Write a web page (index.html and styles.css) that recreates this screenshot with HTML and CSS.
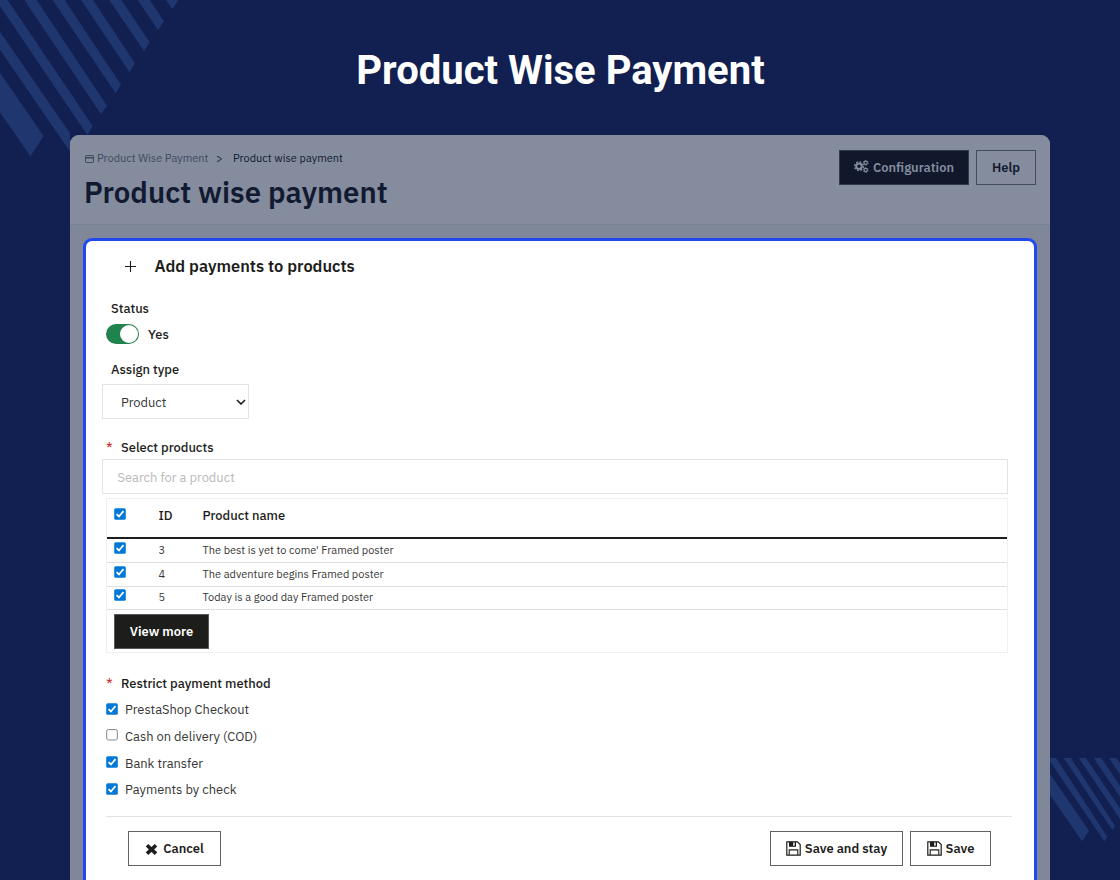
FILE: index.html
```html
<!DOCTYPE html>
<html lang="en">
<head>
<meta charset="utf-8">
<title>Product Wise Payment</title>
<link rel="stylesheet" href="styles.css">
</head>
<body>
<svg width="0" height="0" class="defs">
  <symbol id="on" viewBox="0 0 12 12"><rect x=".2" y=".2" width="11.6" height="11.6" rx="1.6" fill="#0078d7"/><path d="M2.6 6.2 4.9 8.5 9.5 3.2" fill="none" stroke="#fff" stroke-width="1.8"/></symbol>
  <symbol id="off" viewBox="0 0 12 12"><rect x=".7" y=".6" width="10.6" height="10.4" rx="1.8" fill="#fff" stroke="#858585"/></symbol>
  <symbol id="floppy" viewBox="0 0 15 15"><path d="M.8.8h10.6l2.8 2.8v10.6H.8z" fill="#fff" stroke="#1d1d1b" stroke-width="1.2"/><path d="M3 .8h7v5H3z" fill="#1d1d1b"/><path d="M7.2 1.5h1.5v3.2H7.2z" fill="#fff"/><path d="M3.2 14V8.9h8.6V14" fill="none" stroke="#1d1d1b" stroke-width="1.1"/></symbol>
</svg>
<svg class="stripes top" viewBox="0 0 600 510" fill="#20366f">
  <path d="M0 218 131 409 91 469 0 337zM0 95 210 400V455L0 149zM-12 0H23L278 378 262 405zM73 0H110L321 317 303 343zM158 0H194L363 254 347 280zM243 0H279L405 190 389 217zM328 0H364L449 127 432 154zM413 0H449L492 64 474 90zM498 0H535L517 27z"/>
</svg>
<svg class="stripes bottom" viewBox="60 0 210 420" fill="#20366f">
  <path d="M60 102 177 272 156 304 60 165zM53 54H78L232 291 223 304zM101 54H123L255 257 247 270zM146 54H168L270 205V238zM191 54H214L270 138V170zM237 54H259L270 70V104z"/>
</svg>
<h1 class="title">Product Wise Payment</h1>
<main class="frame">
  <header class="head">
    <div>
      <nav class="crumbs">
        <svg width="9" height="8" viewBox="0 0 9 8"><rect x=".5" y=".5" width="8" height="7" rx=".8" fill="none" stroke="#41495d"/><path d="M0 2h9v1.6H0z" fill="#41495d"/></svg>
        <span class="parent">Product Wise Payment</span><span class="sep">&gt;</span><span>Product wise payment</span>
      </nav>
      <h2 class="page-title">Product wise payment</h2>
    </div>
    <div class="actions">
      <button class="btn dim-dark"><svg width="15" height="14" viewBox="0 0 15 14" fill="none" stroke="#848c9e"><circle cx="5" cy="6.2" r="2.8" stroke-width="2"/><circle cx="5" cy="6.2" r="4.4" stroke-width="1.4" stroke-dasharray="1.8 1.656"/><circle cx="11.7" cy="2.8" r="1.6" stroke-width="1.2"/><circle cx="11.7" cy="2.8" r="2.5" stroke-width=".9" stroke-dasharray="1.3 1.318"/><circle cx="11.7" cy="10" r="1.6" stroke-width="1.2"/><circle cx="11.7" cy="10" r="2.5" stroke-width=".9" stroke-dasharray="1.3 1.318"/></svg><span>Configuration</span></button>
      <button class="btn dim"><span>Help</span></button>
    </div>
  </header>
  <section class="card">
    <h3 class="card-title"><svg width="11" height="11" viewBox="0 0 11 11"><path d="M5.5 0v11M0 5.5h11" stroke="#1d1d1b" stroke-width="1.1"/></svg><span>Add payments to products</span></h3>
    <div class="label l-status">Status</div>
    <div class="switch-row"><span class="switch"><i></i></span><span>Yes</span></div>
    <div class="label">Assign type</div>
    <div class="select"><span>Product</span><svg width="10" height="6" viewBox="0 0 10 6"><path d="M1 1l4 4 4-4" fill="none" stroke="#1d1d1b" stroke-width="1.6"/></svg></div>
    <div class="req l-select"><b>*</b><span>Select products</span></div>
    <div class="search">Search for a product</div>
    <div class="table">
      <div class="row th"><svg class="cb"><use href="#on"/></svg><span>ID</span><span>Product name</span></div>
      <div class="row"><svg class="cb"><use href="#on"/></svg><span>3</span><span>The best is yet to come' Framed poster</span></div>
      <div class="row"><svg class="cb"><use href="#on"/></svg><span>4</span><span>The adventure begins Framed poster</span></div>
      <div class="row"><svg class="cb"><use href="#on"/></svg><span>5</span><span>Today is a good day Framed poster</span></div>
      <div class="more"><button class="btn dark"><span>View more</span></button></div>
    </div>
    <div class="req l-restrict"><b>*</b><span>Restrict payment method</span></div>
    <div class="methods">
      <div><svg class="cb"><use href="#on"/></svg><span>PrestaShop Checkout</span></div>
      <div><svg class="cb"><use href="#off"/></svg><span>Cash on delivery (COD)</span></div>
      <div><svg class="cb"><use href="#on"/></svg><span>Bank transfer</span></div>
      <div><svg class="cb"><use href="#on"/></svg><span>Payments by check</span></div>
    </div>
    <footer class="foot">
      <button class="btn cancel"><svg width="13" height="12" viewBox="0 0 13 12"><path d="M2 2.2l9 8.4M11 2.2l-9 8.4" stroke="#1d1d1b" stroke-width="3.6"/></svg><span>Cancel</span></button>
      <button class="btn stay"><svg width="15" height="15"><use href="#floppy"/></svg><span>Save and stay</span></button>
      <button class="btn save"><svg width="15" height="15"><use href="#floppy"/></svg><span>Save</span></button>
    </footer>
  </section>
</main>
</body>
</html>
```
FILE: styles.css
```css
* { box-sizing: border-box; }
body { margin: 0; width: 1120px; height: 880px; overflow: hidden; position: relative; background: #112050; color: #1d1d1b; font-family: "IBM Plex Sans", Roboto, sans-serif; font-size: 12.9px; }
h1, h2, h3 { margin: 0; }
span { white-space: nowrap; }
svg { display: block; flex: none; }
.defs { position: absolute; }
.stripes { position: absolute; }
.top { left: 0; top: 0; width: 200px; height: 170px; }
.bottom { left: 1050px; top: 740px; width: 70px; height: 140px; }
.title { height: 135px; padding: 47px 0 0 1px; line-height: 48px; text-align: center; color: #fff; font-family: Roboto, sans-serif; font-size: 40px; font-weight: 700; }
.frame { position: relative; width: 980px; height: 760px; margin: 0 auto; border-radius: 9px 9px 0 0; background: #7f8799; overflow: hidden; }
.head { display: flex; justify-content: space-between; height: 90px; padding: 14px 14px 0; background: #848c9e; border-bottom: 1px solid #788197; }
.crumbs { display: flex; align-items: center; height: 18px; padding-left: 1px; font-size: 11px; color: #111a30; }
.crumbs svg { margin: 1px 3px 0 0; }
.parent { width: 119px; color: #41495d; }
.sep { width: 17px; }
.page-title { font-size: 29.3px; line-height: 50px; font-weight: 600; color: #111a30; }
.actions { display: flex; gap: 7px; padding-top: .5px; }
.btn { display: flex; align-items: center; justify-content: center; gap: 4px; height: 35px; padding: 0; border: 1px solid #606366; border-radius: 0; background: #fff; color: #1d1d1b; font: 600 12.9px "IBM Plex Sans", Roboto, sans-serif; }
.dim-dark { width: 130px; background: #11182c; border-color: #30384c; color: #848c9e; }
.dim { width: 60px; background: none; border-color: #424a5e; color: #111a30; }
.card { width: 954px; height: 700px; margin: 13px 0 0 13px; border: 3px solid #2149f0; border-radius: 9px; background: #fff; padding: 0 26px 0 16px; }
.card-title { display: flex; align-items: center; height: 50px; padding-left: 23px; gap: 18.5px; font-size: 16.4px; font-weight: 600; }
.label { height: 20px; line-height: 20px; padding-left: 9px; font-weight: 500; }
.l-status { margin-top: 8px; }
.switch-row { display: flex; align-items: center; height: 20px; margin: 5px 0 16px 4.4px; gap: 8.6px; font-weight: 500; }
.switch { display: flex; justify-content: flex-end; width: 33px; height: 20px; padding: 1px; border-radius: 10px; background: #20824c; }
.switch i { width: 18px; height: 18px; border-radius: 50%; background: #fff; }
.select { display: flex; align-items: center; justify-content: space-between; width: 147px; height: 35px; margin-top: 4px; padding: 1px 2px 0 18px; border: 1px solid #e2e3e3; color: #363636; }
.req { display: flex; align-items: center; height: 20px; padding-left: 4px; font-weight: 500; }
.req b { width: 15px; color: #c8281e; font-weight: 400; font-size: 15px; }
.l-select { margin-top: 18px; }
.search { width: 906px; height: 35px; margin: 2px 0 4px; padding: 0 14.5px; border: 1px solid #e2e3e3; line-height: 35px; color: #b9b9b9; }
.table { width: 902px; height: 155px; margin-left: 4px; border: 1px solid #f0f0f0; }
.cb { width: 12px; height: 12px; }
.row { display: grid; grid-template-columns: 44.5px 44px 1fr; align-items: center; height: 24px; padding: 0 0 1px 7px; border-bottom: 1px solid #dfdfdf; font-size: 11px; color: #363636; }
.row .cb { margin-top: -4px; }
.th { height: 40px; border-bottom: 2px solid #1d1d1b; font-size: 12.9px; font-weight: 500; color: #1d1d1b; padding-bottom: 5px; }
.row + .row { height: 23.8px; }
.more { padding: 3.6px 7px; }
.dark { width: 95px; background: #1d1d1b; color: #fff; border-color: #55585c; }
.l-restrict { margin-top: 20px; }
.methods { padding: 3.6px 0 0 4px; }
.methods div { display: flex; align-items: center; gap: 7px; height: 26.6px; color: #363636; }
.methods .cb { margin-top: -2px; }
.foot { display: flex; width: 906px; margin: 13.4px 0 0 4px; padding: 14px 21px 0 22px; border-top: 1px solid #e2e2e2; }
.cancel { width: 93px; gap: 5px; margin-right: auto; }
.stay { width: 133px; margin-right: 7px; }
.save { width: 81px; }
```
